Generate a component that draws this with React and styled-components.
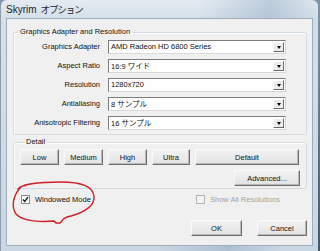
import React from 'react';
import styled, { createGlobalStyle } from 'styled-components';

const Global = createGlobalStyle`
  html, body { margin: 0; padding: 0; }
  body {
    background: linear-gradient(180deg, #7f93a6 0%, #45586b 100%);
    font-family: "Liberation Sans", Arial, "Noto Sans CJK JP", sans-serif;
    color: #111;
  }
`;

const Window = styled.div`
  position: relative;
  width: 318px;
  height: 251px;
  box-sizing: border-box;
  padding: 0 5px 5px 5px;
  display: flex;
  flex-direction: column;
  border-radius: 6px 6px 0 0;
  border-left: 1px solid #8e9cab;
  background:
    linear-gradient(100deg, rgba(255,255,255,0) 55%, rgba(120,150,180,0.35) 75%, rgba(255,255,255,0) 90%),
    linear-gradient(180deg, #e4ebf2 0%, #d6e0ea 18px, #c9d6e3 100%);
`;

const TitleBar = styled.div`
  height: 18px;
  display: flex;
  align-items: center;
  font-family: "Liberation Sans", Arial, "Noto Sans CJK JP", sans-serif;
  font-size: 10px;
  color: #1e1e1e;
  white-space: nowrap;
`;

const TitleJp = styled.span`
  font-family: "Noto Sans CJK JP", sans-serif;
  font-size: 9.5px;
  letter-spacing: -1.1px;
  margin-left: 4px;
`;

const Client = styled.div`
  flex: 1;
  background: #f0f0f0;
  border: 1px solid #9eadbd;
  display: flex;
  flex-direction: column;
  font-size: 7.5px;
  padding: 8px 5px 0 6px;
`;

const Group = styled.fieldset`
  margin: ${p => p.$top || 0}px 0 0 0;
  min-width: 0;
  border: 1px solid #d3dbe2;
  border-radius: 2px;
  box-shadow: inset 1px 1px #ffffff;
  padding: ${p => p.$pad};
`;

const Legend = styled.legend`
  padding: 0 2px;
  margin-left: 4px;
  font-size: 7.5px;
  line-height: 10px;
  color: #111;
`;

const Rows = styled.div`
  display: grid;
  grid-template-columns: 86px 178px;
  column-gap: 8px;
  row-gap: 5px;
  align-items: center;
`;

const Label = styled.div`
  text-align: right;
  white-space: nowrap;
  line-height: 14px;
`;

const Combo = styled.div`
  height: 14px;
  box-sizing: border-box;
  border: 1px solid;
  border-color: #7d7d7d #d9d9d9 #d9d9d9 #7d7d7d;
  background: #ffffff;
  display: flex;
  align-items: center;
  padding-left: 2px;
  white-space: nowrap;
`;

const ComboText = styled.span`
  flex: 1;
  line-height: 12px;
`;

const Jp = styled.span`
  font-family: "Noto Sans CJK JP", sans-serif;
  font-size: 7.5px;
`;

const DropButton = styled.div`
  width: 11px;
  height: 10px;
  margin-right: 1px;
  box-sizing: border-box;
  border: 1px solid;
  border-color: #ffffff #6b6b6b #6b6b6b #ffffff;
  background: #ececec;
  display: flex;
  align-items: center;
  justify-content: center;
  &::after {
    content: "";
    border-left: 2.5px solid transparent;
    border-right: 2.5px solid transparent;
    border-top: 3px solid #000;
  }
`;

const ButtonRow = styled.div`
  display: grid;
  grid-template-columns: 39px 39px 39px 38px 104px;
  column-gap: 5px;
`;

const RightRow = styled.div`
  display: flex;
  justify-content: flex-end;
  gap: 15px;
  margin-top: ${p => p.$top || 0}px;
`;

const Button = styled.button`
  width: ${p => (p.$w ? p.$w + 'px' : 'auto')};
  height: 16px;
  box-sizing: border-box;
  padding: 0;
  font-family: "Liberation Sans", Arial, sans-serif;
  font-size: 7.5px;
  color: #111;
  background: linear-gradient(180deg, #f2f2f2 0%, #ebebeb 50%, #e2e2e2 100%);
  border: 1px solid;
  border-color: #fafafa #6f6f6f #6f6f6f #fafafa;
  box-shadow: inset -1px -1px #b9b9b9;
  border-radius: 1px;
`;

const CheckRow = styled.div`
  display: flex;
  align-items: center;
  margin-top: 6px;
  padding-left: 8px;
  height: 9px;
`;

const CheckItem = styled.label`
  display: flex;
  align-items: center;
  gap: 5px;
  width: ${p => (p.$w ? p.$w + 'px' : 'auto')};
  color: ${p => (p.$disabled ? '#a3a3a3' : '#111')};
  white-space: nowrap;
`;

const Box = styled.span`
  width: 9px;
  height: 9px;
  box-sizing: border-box;
  border: 1px solid ${p => (p.$disabled ? '#b4b4b4' : '#8b8b8b')};
  background: ${p => (p.$disabled ? '#f3f3f3' : '#f7f7f7')};
  display: flex;
  align-items: center;
  justify-content: center;
`;

const Circle = styled.svg`
  position: absolute;
  left: 0;
  top: 0;
  pointer-events: none;
`;

function ComboBox({ children }) {
  return (
    <Combo>
      <ComboText>{children}</ComboText>
      <DropButton />
    </Combo>
  );
}

export default function App() {
  return (
    <>
      <Global />
      <Window>
        <TitleBar>
          Skyrim<TitleJp>オプション</TitleJp>
        </TitleBar>
        <Client>
          <Group $pad="3px 0 4px 0">
            <Legend>Graphics Adapter and Resolution</Legend>
            <Rows>
              <Label>Graphics Adapter</Label>
              <ComboBox>AMD Radeon HD 6800 Series</ComboBox>
              <Label>Aspect Ratio</Label>
              <ComboBox>16:9 <Jp>ワイド</Jp></ComboBox>
              <Label>Resolution</Label>
              <ComboBox>1280x720</ComboBox>
              <Label>Antialiasing</Label>
              <ComboBox>8 <Jp>サンプル</Jp></ComboBox>
              <Label>Anisotropic Filtering</Label>
              <ComboBox>16 <Jp>サンプル</Jp></ComboBox>
            </Rows>
          </Group>
          <Group $top={2} $pad="2px 6px 2px 6px">
            <Legend>Detail</Legend>
            <ButtonRow>
              <Button>Low</Button>
              <Button>Medium</Button>
              <Button>High</Button>
              <Button>Ultra</Button>
              <Button>Default</Button>
            </ButtonRow>
            <RightRow $top={5}>
              <Button $w={66}>Advanced...</Button>
            </RightRow>
          </Group>
          <CheckRow>
            <CheckItem $w={175}>
              <Box>
                <svg width="7" height="7" viewBox="0 0 7 7">
                  <path d="M1 3.5 L2.8 5.5 L6 1.2" fill="none" stroke="#1a1a1a" strokeWidth="1.3" />
                </svg>
              </Box>
              Windowed Mode
            </CheckItem>
            <CheckItem $disabled>
              <Box $disabled />
              Show All Resolutions
            </CheckItem>
          </CheckRow>
          <RightRow $top={16}>
            <Button $w={51}>OK</Button>
            <Button $w={50}>Cancel</Button>
          </RightRow>
        </Client>
        <Circle width="320" height="251" viewBox="0 0 320 251">
          <path
            d="M17 189 C 22 183, 40 182, 60 182 C 78 182, 92 186, 93 196 C 94 206, 84 212, 70 216 C 64 217, 62 219, 61 221 C 59 224, 55 224, 53 221 C 42 222, 22 222, 15 214 C 10 207, 12 196, 19 188 C 22 185, 26 184, 24 186"
            fill="none"
            stroke="#d0202a"
            strokeWidth="1.4"
            strokeLinecap="round"
          />
        </Circle>
      </Window>
    </>
  );
}
